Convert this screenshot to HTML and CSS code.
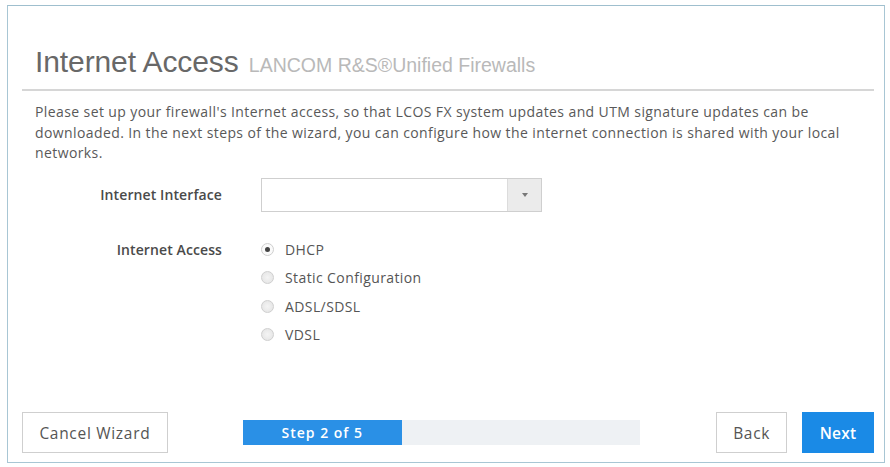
FILE: index.html
```html
<!DOCTYPE html>
<html>
<head>
<meta charset="utf-8">
<link rel="stylesheet" href="styles.css">
</head>
<body>
<div class="panel">
  <div class="header">
    <h1 class="title">Internet Access <span class="subtitle">LANCOM R&amp;S®Unified Firewalls</span></h1>
  </div>
  <p class="intro">Please set up your firewall's Internet access, so that LCOS FX system updates and UTM signature updates can be downloaded. In the next steps of the wizard, you can configure how the internet connection is shared with your local networks.</p>
  <div class="form">
    <div class="row">
      <div class="label">Internet Interface</div>
      <div class="select"><span class="select-value"></span><span class="select-arrow"><span class="caret"></span></span></div>
    </div>
    <div class="row row-radios">
      <div class="label label-radio">Internet Access</div>
      <div class="radios">
        <div class="radio"><span class="dot checked"></span><span>DHCP</span></div>
        <div class="radio"><span class="dot"></span><span>Static Configuration</span></div>
        <div class="radio"><span class="dot"></span><span>ADSL/SDSL</span></div>
        <div class="radio"><span class="dot"></span><span>VDSL</span></div>
      </div>
    </div>
  </div>
  <div class="footer">
    <div class="btn btn-cancel">Cancel Wizard</div>
    <div class="progress"><div class="progress-fill" style="width:40%">Step 2 of 5</div></div>
    <div class="btn btn-back">Back</div>
    <div class="btn btn-next">Next</div>
  </div>
</div>
</body>
</html>
```

FILE: styles.css
```css
html, body {
  margin: 0;
  padding: 0;
  background: #ffffff;
}
body {
  width: 890px;
  height: 467px;
  overflow: hidden;
  font-family: "Open Sans", "Noto Sans", sans-serif;
}
.panel {
  box-sizing: border-box;
  margin: 5px 0 0 7px;
  width: 878px;
  height: 458px;
  border: 1px solid #a8c6d4;
  border-top-color: #9fbfce;
  display: flex;
  flex-direction: column;
  padding: 0 10px 9px 14px;
  background: #fff;
}
.header {
  border-bottom: 2px solid #d6d6d6;
  padding: 39px 0 7px 13px;
}
.title {
  margin: 0;
  font-family: "Liberation Sans", Arial, sans-serif;
  font-weight: normal;
  font-size: 30px;
  line-height: 34px;
  color: #686868;
  letter-spacing: -0.1px;
}
.subtitle {
  font-size: 19.5px;
  color: #b9b9b9;
  letter-spacing: 0;
  margin-left: 2px;
}
.intro {
  margin: 11px 0 0 13px;
  font-size: 14px;
  letter-spacing: 0.4px;
  line-height: 20.5px;
  color: #595959;
  width: 830px;
}
.form {
  margin-top: 14px;
}
.row {
  display: flex;
  align-items: center;
}
.label {
  width: 200px;
  text-align: right;
  font-size: 14px;
  letter-spacing: 0.1px;
  font-weight: 600;
  color: #4a4a4a;
  margin-right: 39px;
}
.select {
  box-sizing: border-box;
  width: 281px;
  height: 34px;
  border: 1px solid #cfcfcf;
  display: flex;
  background: #fff;
}
.select-value {
  flex: 1;
}
.select-arrow {
  width: 33px;
  background: #ebebeb;
  border-left: 1px solid #dcdcdc;
  display: flex;
  align-items: center;
  justify-content: center;
}
.caret {
  width: 0;
  height: 0;
  border-left: 3px solid transparent;
  border-right: 3px solid transparent;
  border-top: 4px solid #777;
}
.row-radios {
  align-items: flex-start;
  margin-top: 28px;
}
.label-radio {
  line-height: 20px;
}
.radios {
  display: flex;
  flex-direction: column;
  gap: 8.3px;
}
.radio {
  display: flex;
  align-items: center;
  height: 20px;
  font-size: 14px;
  letter-spacing: 0.4px;
  color: #555;
}
.dot {
  box-sizing: border-box;
  width: 13px;
  height: 13px;
  border-radius: 50%;
  border: 1px solid #cfcfcf;
  background: radial-gradient(circle, #f4f4f4 0%, #e2e2e2 100%);
  margin-right: 11px;
  position: relative;
}
.dot.checked {
  background: #fafafa;
}
.dot.checked::after {
  content: "";
  position: absolute;
  left: 3px;
  top: 3px;
  width: 5px;
  height: 5px;
  border-radius: 50%;
  background: #444;
}
.footer {
  margin-top: auto;
  display: flex;
  align-items: center;
}
.btn {
  box-sizing: border-box;
  height: 41px;
  display: flex;
  align-items: center;
  justify-content: center;
  font-size: 15.5px;
  letter-spacing: 0.7px;
  color: #555;
  border: 1px solid #cfcfcf;
  background: #fff;
}
.btn-cancel {
  width: 146px;
}
.progress {
  margin-left: 75px;
  width: 398px;
  height: 25px;
  background: #eef1f4;
  display: flex;
}
.progress-fill {
  background: #2a90e6;
  color: #fff;
  font-size: 14px;
  letter-spacing: 1px;
  font-weight: 600;
  display: flex;
  align-items: center;
  justify-content: center;
}
.btn-back {
  margin-left: 76px;
  width: 71px;
}
.btn-next {
  margin-left: 15px;
  width: 72px;
  background: #1a8ae6;
  border-color: #1a8ae6;
  color: #fff;
  font-weight: 600;
  letter-spacing: 0.2px;
}
```
